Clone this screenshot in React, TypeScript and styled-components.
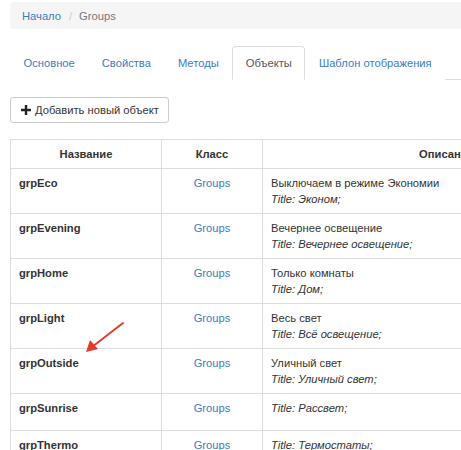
import React from "react";
import styled, { createGlobalStyle } from "styled-components";

const Global = createGlobalStyle`
  html, body { margin: 0; padding: 0; background: #fff; overflow: hidden; }
  body { font-family: "Liberation Sans", Arial, sans-serif; font-size: 11.2px; color: #333; line-height: 16px; }
  * { box-sizing: border-box; }
`;

const Page = styled.div`
  position: relative;
  width: 760px;
  padding: 2px 0 0 10px;
`;

const Breadcrumb = styled.ol`
  list-style: none;
  margin: 0;
  padding: 0 12px;
  background: #f5f5f5;
  border-radius: 4px;
  display: flex;
  height: 27px;
  align-items: center;
`;

const Crumb = styled.li<{ $active?: boolean }>`
  color: ${(p) => (p.$active ? "#777" : "#3a7cc0")};
`;

const Sep = styled.li`
  color: #ccc;
  padding: 0 7px 0 8px;
`;

const Tabs = styled.ul`
  list-style: none;
  margin: 17px 0 0 0;
  padding: 0;
  display: flex;
  border-bottom: 1px solid #ddd;
`;

const Tab = styled.li<{ $active?: boolean }>`
  margin: 0 0 -1px 0;
  padding: 8px 12.5px 8px 12.5px;
  line-height: 16px;
  border: 1px solid ${(p) => (p.$active ? "#ddd" : "transparent")};
  border-bottom-color: ${(p) => (p.$active ? "#fff" : "transparent")};
  border-radius: 4px 4px 0 0;
  background: #fff;
  color: ${(p) => (p.$active ? "#555" : "#3a7cc0")};
  white-space: nowrap;
`;

const Toolbar = styled.div`
  padding: 17px 0 16px;
`;

const Button = styled.button`
  display: inline-flex;
  align-items: center;
  gap: 4px;
  height: 26px;
  padding: 0 9px 0 10px;
  font-family: "Liberation Sans", Arial, sans-serif;
  font-size: 11.2px;
  color: #333;
  background: #fff;
  border: 1px solid #ccc;
  border-radius: 3px;
`;

const Table = styled.table`
  border-collapse: collapse;
  width: 750px;
  table-layout: fixed;
  border: 1px solid #ddd;
`;

const Th = styled.th<{ $w: number }>`
  width: ${(p) => p.$w}px;
  height: 29px;
  padding: 0 8px;
  border: 1px solid #ddd;
  font-weight: bold;
  text-align: center;
  color: #333;
`;

const Td = styled.td<{ $center?: boolean }>`
  height: 37px;
  padding: 6px 8px 6px 8px;
  border: 1px solid #ddd;
  vertical-align: top;
  line-height: 16px;
  text-align: ${(p) => (p.$center ? "center" : "left")};
`;

const Name = styled.span`
  font-weight: bold;
  color: #333;
`;

const Link = styled.span`
  color: #3a7cc0;
`;

const Title = styled.i`
  display: block;
`;

const Arrow = styled.svg`
  position: absolute;
  left: 80px;
  top: 318px;
`;

const rows: [string, string, string][] = [
  ["grpEco", "Выключаем в режиме Экономии", "Title: Эконом;"],
  ["grpEvening", "Вечернее освещение", "Title: Вечернее освещение;"],
  ["grpHome", "Только комнаты", "Title: Дом;"],
  ["grpLight", "Весь свет", "Title: Всё освещение;"],
  ["grpOutside", "Уличный свет", "Title: Уличный свет;"],
  ["grpSunrise", "", "Title: Рассвет;"],
  ["grpThermo", "", "Title: Термостаты;"],
];

export default function App() {
  return (
    <>
      <Global />
      <Page>
        <Breadcrumb>
          <Crumb>Начало</Crumb>
          <Sep>/</Sep>
          <Crumb $active>Groups</Crumb>
        </Breadcrumb>
        <Tabs>
          <Tab>Основное</Tab>
          <Tab>Свойства</Tab>
          <Tab>Методы</Tab>
          <Tab $active>Объекты</Tab>
          <Tab>Шаблон отображения</Tab>
        </Tabs>
        <Toolbar>
          <Button>
            <svg width="10" height="10" viewBox="0 0 10 10">
              <path d="M3.8 0h2.4v3.8H10v2.4H6.2V10H3.8V6.2H0V3.8h3.8z" fill="#222" />
            </svg>
            Добавить новый объект
          </Button>
        </Toolbar>
        <Table>
          <thead>
            <tr>
              <Th $w={151}>Название</Th>
              <Th $w={101}>Класс</Th>
              <Th $w={368}>Описание</Th>
              <Th $w={130}></Th>
            </tr>
          </thead>
          <tbody>
            {rows.map(([n, d, t]) => (
              <tr key={n}>
                <Td><Name>{n}</Name></Td>
                <Td $center><Link>Groups</Link></Td>
                <Td>
                  {d && <div>{d}</div>}
                  <Title>{t}</Title>
                </Td>
                <Td></Td>
              </tr>
            ))}
          </tbody>
        </Table>
        <Arrow width="50" height="40" viewBox="0 0 50 40">
          <line x1="43" y1="5" x2="12" y2="29" stroke="#e53b2f" strokeWidth="2" strokeLinecap="round" />
          <path d="M6 34 L10 22 L18 31 Z" fill="#e53b2f" />
        </Arrow>
      </Page>
    </>
  );
}
